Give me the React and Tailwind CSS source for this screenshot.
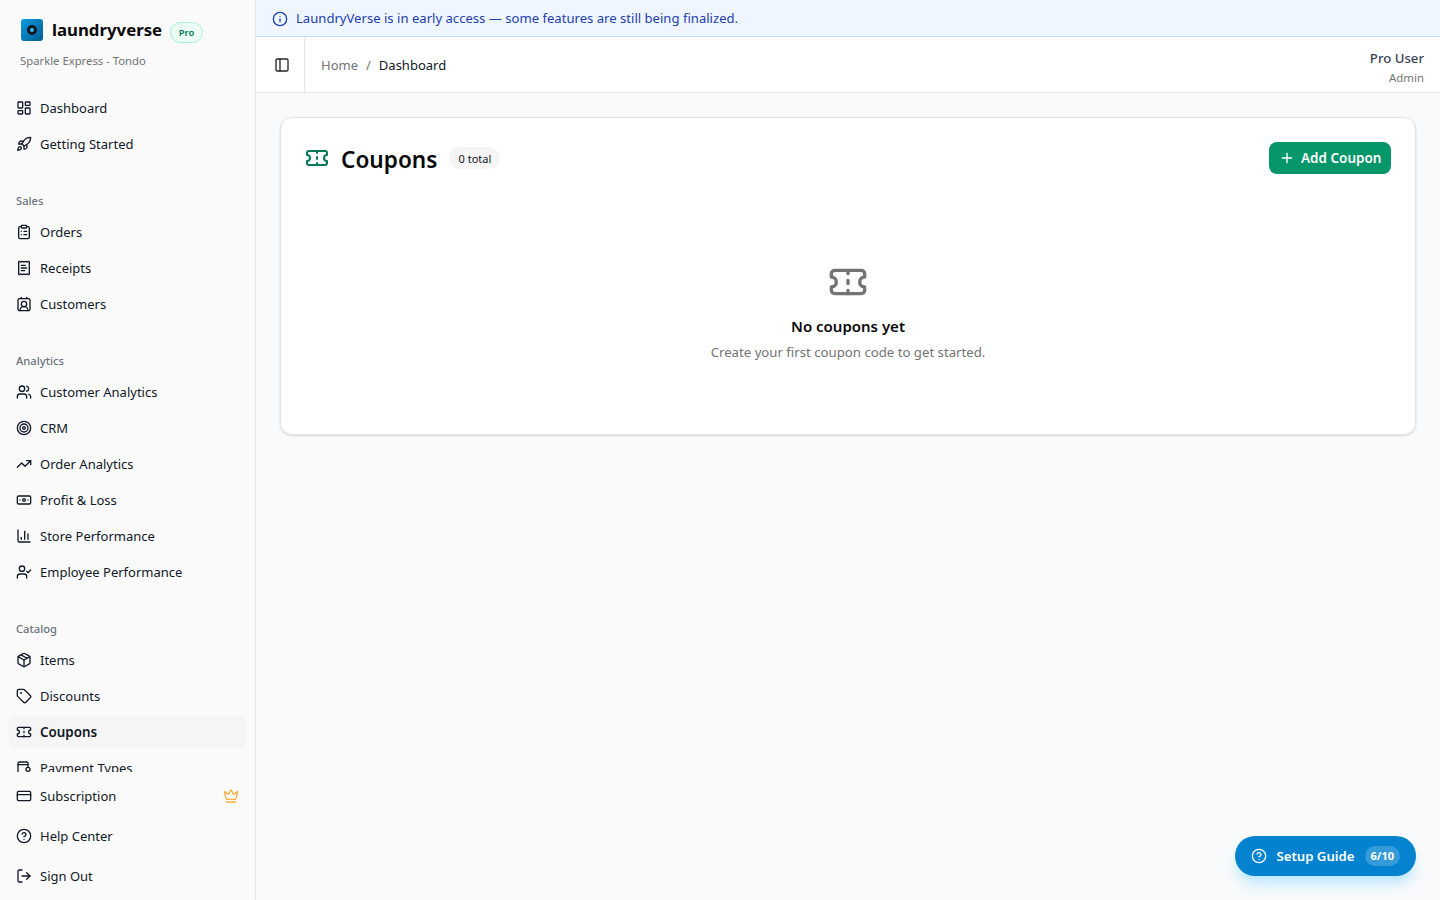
import React from "react";
import {
  LayoutDashboard, Rocket, ClipboardList, ReceiptText, ContactRound, Users, Target, TrendingUp,
  Banknote, ChartColumn, UserCheck, Package, Tag, CreditCard, Crown, CircleHelp, LogOut,
  PanelLeft, Info, Plus,
} from "lucide-react";

const Coupon = ({ className, strokeWidth = 2 }) => (
  <svg viewBox="0 0 24 24" fill="none" stroke="currentColor" strokeWidth={strokeWidth} strokeLinecap="round" strokeLinejoin="round" className={className}>
    <path d="M4 5h16a2 2 0 0 1 2 2v2a3 3 0 0 0 0 6v2a2 2 0 0 1-2 2H4a2 2 0 0 1-2-2v-2a3 3 0 0 0 0-6V7a2 2 0 0 1 2-2Z" />
    <path d="M12 5v2M12 11v2M12 17v2" />
  </svg>
);

const PaymentIcon = ({ className, strokeWidth = 2 }) => (
  <svg viewBox="0 0 24 24" fill="none" stroke="currentColor" strokeWidth={strokeWidth} strokeLinecap="round" strokeLinejoin="round" className={className}>
    <path d="M3 21V5a2 2 0 0 1 2-2h11a2 2 0 0 1 2 2v6" />
    <path d="M3 7h15" />
    <circle cx="18" cy="14" r="3" />
  </svg>
);

const Item = ({ icon: Icon, label, active }) => (
  <div className={`flex h-8 items-center gap-2 rounded-lg px-2 text-[#111827] ${active ? "bg-[#f5f5f5] text-[13.4px] font-semibold" : "text-[13px]"}`}>
    <Icon className="h-4 w-4 shrink-0" strokeWidth={2} />
    <span className={`truncate ${active ? "" : "pt-[2px]"}`}>{label}</span>
  </div>
);

const Group = ({ title, items }) => (
  <div className="mt-[26px] px-2">
    <div className="flex h-[30px] items-center px-2 text-[11.2px] font-medium text-[#6b7280]">{title}</div>
    <div className="flex flex-col gap-1">
      {items.map((i) => <Item key={i.label} {...i} />)}
    </div>
  </div>
);

export default function App() {
  return (
    <div className="flex h-[900px] w-full overflow-hidden bg-[#f9fafb] font-['Noto_Sans',sans-serif] text-[#111827]">
      <aside className="flex h-full w-[256px] shrink-0 flex-col border-r border-[#e5e5e5] bg-[#fafafa]">
        <div className="h-[92px] shrink-0 pl-5 pt-[19px]">
          <div className="flex h-[22px] items-center">
            <div className="ml-px flex h-[22px] w-[22px] items-center justify-center rounded-[3px] bg-gradient-to-br from-[#0d9ade] to-[#045e96]">
              <div className="flex h-[10px] w-[10px] items-center justify-center rounded-full bg-[#111827]">
                <div className="h-[4px] w-[4px] rounded-full bg-[#38bdf8]" />
              </div>
            </div>
            <span className="ml-[9px] text-[16.8px] font-bold leading-6 text-[#0a0a0a]">laundryverse</span>
            <span className="ml-2 mt-[5px] flex h-[21px] w-[33px] items-center justify-center rounded-full border border-[#a7f3d0] bg-[#ecfdf5] pt-px text-[9.5px] font-semibold text-[#047857]">Pro</span>
          </div>
          <div className="mt-[12px] text-[11.3px] leading-4 text-[#737373]">Sparkle Express - Tondo</div>
        </div>
        <div className="min-h-0 flex-1 overflow-hidden">
          <div className="flex flex-col gap-1 px-2">
            <Item icon={LayoutDashboard} label="Dashboard" />
            <Item icon={Rocket} label="Getting Started" />
          </div>
          <Group title="Sales" items={[
            { icon: ClipboardList, label: "Orders" },
            { icon: ReceiptText, label: "Receipts" },
            { icon: ContactRound, label: "Customers" },
          ]} />
          <Group title="Analytics" items={[
            { icon: Users, label: "Customer Analytics" },
            { icon: Target, label: "CRM" },
            { icon: TrendingUp, label: "Order Analytics" },
            { icon: Banknote, label: "Profit & Loss" },
            { icon: ChartColumn, label: "Store Performance" },
            { icon: UserCheck, label: "Employee Performance" },
          ]} />
          <Group title="Catalog" items={[
            { icon: Package, label: "Items" },
            { icon: Tag, label: "Discounts" },
            { icon: Coupon, label: "Coupons", active: true },
            { icon: PaymentIcon, label: "Payment Types" },
          ]} />
        </div>
        <div className="flex h-[128px] shrink-0 flex-col px-2 pt-2">
          <div className="flex h-8 items-center gap-2 px-2 text-[13px]">
            <CreditCard className="h-4 w-4" />
            <span className="flex-1 pt-[2px]">Subscription</span>
            <Crown className="h-4 w-4 text-[#fbb040]" />
          </div>
          <div className="mt-2">
            <Item icon={CircleHelp} label="Help Center" />
          </div>
          <div className="mt-2">
            <Item icon={LogOut} label="Sign Out" />
          </div>
        </div>
      </aside>

      <main className="relative flex min-w-0 flex-1 flex-col">
        <div className="flex h-[37px] shrink-0 items-center gap-2 border-b border-[#bfdbfe] bg-[#eff6ff] px-4 pt-px text-[13.1px] text-[#1e40af]">
          <Info className="h-4 w-4" />
          <span>LaundryVerse is in early access — some features are still being finalized.</span>
        </div>
        <header className="flex h-[56px] shrink-0 items-center border-b border-[#e5e5e5] bg-white">
          <div className="flex h-full w-[49px] items-center border-r border-[#e5e5e5] pl-[18px]">
            <PanelLeft className="h-4 w-4 text-[#262626]" />
          </div>
          <nav className="ml-4 flex items-center gap-2 pt-[2px] text-[13px]">
            <span className="text-[#737373]">Home</span>
            <span className="text-[#737373]">/</span>
            <span className="text-[#111827]">Dashboard</span>
          </nav>
          <div className="ml-auto pr-4 pt-[4px] text-right">
            <div className="text-[13.2px] font-medium leading-5 text-[#374151]">Pro User</div>
            <div className="mt-[2px] text-[11.4px] leading-4 text-[#737373]">Admin</div>
          </div>
        </header>
        <div className="flex-1 p-6">
          <section className="h-[318px] rounded-xl border border-[#e5e5e5] bg-white p-6 shadow-sm">
            <div className="flex items-start justify-between">
              <div className="flex h-8 items-center">
                <Coupon className="h-6 w-6 text-[#047857]" />
                <h1 className="ml-3 mt-[4px] text-[22.6px] font-semibold text-[#0a0a0a]">Coupons</h1>
                <span className="ml-3 flex h-[22px] w-[51px] items-center justify-center rounded-full bg-[#f5f5f5] pt-[2px] text-[11px] text-[#111827]">0 total</span>
              </div>
              <button className="flex h-8 w-[122px] items-center gap-1.5 rounded-lg bg-[#059669] pl-2.5 text-[13.5px] font-semibold text-white">
                <Plus className="h-4 w-4" />
                Add Coupon
              </button>
            </div>
            <div className="mt-[88px] flex flex-col items-center">
              <Coupon className="h-10 w-10 text-[#737373]" />
              <div className="mt-[13px] text-[15px] font-semibold text-[#0a0a0a]">No coupons yet</div>
              <div className="mt-[5px] text-[13.2px] text-[#737373]">Create your first coupon code to get started.</div>
            </div>
          </section>
        </div>
        <button className="absolute bottom-6 right-6 flex h-10 items-center rounded-full bg-[#0383cf] pl-4 pr-4 text-[13.2px] font-semibold text-white shadow-lg shadow-sky-200">
          <CircleHelp className="h-4 w-4" />
          <span className="ml-[9px] pt-[2px]">Setup Guide</span>
          <span className="ml-[10px] flex h-5 items-center rounded-full bg-white/20 px-1.5 pt-px text-[11px] font-bold">6/10</span>
        </button>
      </main>
    </div>
  );
}
